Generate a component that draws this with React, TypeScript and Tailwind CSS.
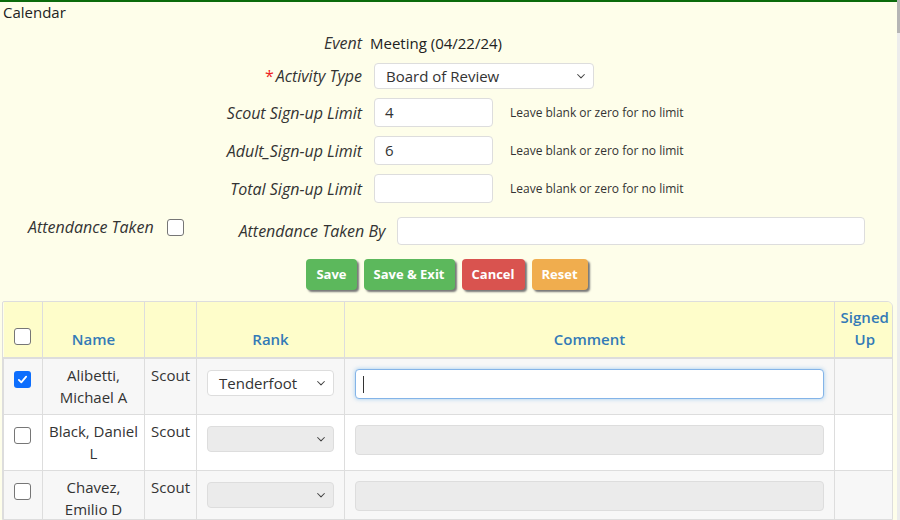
import React from "react";

const font = { fontFamily: '"Open Sans", "Noto Sans", sans-serif' };

function Chevron() {
  return (
    <svg width="12" height="12" viewBox="0 0 16 16" className="text-[#444]">
      <path d="M3.5 6l4.5 4.5L12.5 6" fill="none" stroke="currentColor" strokeWidth="1.4" strokeLinecap="round" strokeLinejoin="round" />
    </svg>
  );
}

function Checkbox({ checked }: { checked?: boolean }) {
  if (checked) {
    return (
      <div className="w-[17px] h-[17px] rounded-[3px] bg-[#0d6efd] flex items-center justify-center">
        <svg width="13" height="13" viewBox="0 0 16 16">
          <path d="M3.5 8.5l3 3 6-7" fill="none" stroke="white" strokeWidth="2.2" strokeLinecap="round" strokeLinejoin="round" />
        </svg>
      </div>
    );
  }
  return <div className="w-[17px] h-[17px] rounded-[3px] border border-[#767676] bg-white" />;
}

function LimitRow({ label, value }: { label: string; value: string }) {
  return (
    <div className="flex items-center h-[29px]">
      <div className="w-[362px] text-right italic text-[16px] text-[#333]">{label}</div>
      <div className="ml-[12px] w-[119px] h-[29px] bg-white border border-[#ddd] rounded-[4px] flex items-center px-[10px] text-[15px] text-[#333]">{value}</div>
      <div className="ml-[17px] text-[12px] text-[#333]">Leave blank or zero for no limit</div>
    </div>
  );
}

function Btn({ label, cls }: { label: string; cls: string }) {
  return (
    <div className={`h-[31px] px-[10px] rounded-[4px] flex items-center text-white font-bold text-[13px] shadow-[2px_2px_2px_#777] ${cls}`}>{label}</div>
  );
}

function Row({ name1, name2, checked, rank, focused, bg }: { name1: string; name2: string; checked?: boolean; rank?: string; focused?: boolean; bg: string }) {
  return (
    <tr className={`${bg} h-[56px]`}>
      <td className="border border-[#ddd] align-top pt-[12px] pl-[10px]">
        <Checkbox checked={checked} />
      </td>
      <td className="border border-[#ddd] align-top text-center pt-[5px] leading-[22px] text-[15px] text-[#333]">
        {name1}
        <br />
        {name2}
      </td>
      <td className="border border-[#ddd] align-top pt-[5px] pl-[6px] leading-[22px] text-[15px] text-[#333]">Scout</td>
      <td className="border border-[#ddd] align-top pt-[11px] px-[10px]">
        <div className={`h-[26px] rounded-[4px] border flex items-center justify-between pl-[11px] pr-[6px] text-[15px] text-[#333] ${rank ? "bg-white border-[#ddd]" : "bg-[#ebebeb] border-[#ddd]"}`}>
          <span>{rank ?? ""}</span>
          <Chevron />
        </div>
      </td>
      <td className="border border-[#ddd] align-top pt-[10px] pl-[10px] pr-[10px]">
        {focused ? (
          <div className="h-[30px] rounded-[4px] border border-[#84b4e8] bg-white shadow-[0_0_4px_rgba(102,175,233,0.6)] flex items-center pl-[7px]">
            <div className="w-px h-[17px] bg-[#333]" />
          </div>
        ) : (
          <div className="h-[30px] rounded-[4px] border border-[#ddd] bg-[#ebebeb]" />
        )}
      </td>
      <td className="border border-[#ddd]" />
    </tr>
  );
}

export default function App() {
  return (
    <div style={font} className="w-[900px] h-[520px] overflow-hidden flex bg-[#fefeea]">
      <div className="w-[897px] flex flex-col border-t-[2px] border-[#0b6b0b]">
        <div className="pl-[3px] text-[15px] text-[#222] leading-[20px]">Calendar</div>

        <div className="flex items-center mt-[11px] h-[20px]">
          <div className="w-[362px] text-right italic text-[16px] text-[#333]">Event</div>
          <div className="ml-[8px] text-[15px] text-[#222]">Meeting (04/22/24)</div>
        </div>

        <div className="flex items-center mt-[10px] h-[26px]">
          <div className="w-[362px] text-right italic text-[16px] text-[#333]">
            <span className="text-[#e22] not-italic mr-[2px]">*</span>Activity Type
          </div>
          <div className="ml-[12px] w-[220px] h-[26px] bg-white border border-[#ddd] rounded-[4px] flex items-center justify-between pl-[11px] pr-[6px] text-[15px] text-[#333]">
            <span>Board of Review</span>
            <Chevron />
          </div>
        </div>

        <div className="flex flex-col gap-[9px] mt-[9px]">
          <LimitRow label="Scout Sign-up Limit" value="4" />
          <LimitRow label="Adult_Sign-up Limit" value="6" />
          <LimitRow label="Total Sign-up Limit" value="" />
        </div>

        <div className="flex items-center mt-[14px] h-[28px]">
          <div className="ml-[28px] italic text-[16px] text-[#333] mb-[8px]">Attendance Taken</div>
          <div className="ml-[13px] mb-[8px]">
            <Checkbox />
          </div>
          <div className="ml-[55px] italic text-[16px] text-[#333]">Attendance Taken By</div>
          <div className="ml-[12px] w-[468px] h-[28px] bg-white border border-[#ddd] rounded-[4px]" />
        </div>

        <div className="flex justify-center gap-[7px] mt-[14px] pr-[3px]">
          <Btn label="Save" cls="bg-[#5cb85c]" />
          <Btn label="Save & Exit" cls="bg-[#5cb85c]" />
          <Btn label="Cancel" cls="bg-[#d9534f]" />
          <Btn label="Reset" cls="bg-[#f0ad4e]" />
        </div>

        <div className="ml-[2px] mt-[11px] w-[891px] border border-[#ddd] rounded-tr-[6px] rounded-tl-[2px] overflow-hidden">
          <table className="w-[891px] border-collapse table-fixed">
            <colgroup>
              <col className="w-[39px]" />
              <col className="w-[102px]" />
              <col className="w-[52px]" />
              <col className="w-[148px]" />
              <col className="w-[490px]" />
              <col className="w-[60px]" />
            </colgroup>
            <thead>
              <tr className="bg-[#fefdca] h-[56px] border-b-[2px] border-[#ddd]">
                <th className="border-r border-[#ddd] align-bottom pb-[12px] pl-[10px] text-left">
                  <Checkbox />
                </th>
                <th className="border-r border-[#ddd] align-bottom pb-[7px] text-[15px] font-semibold text-[#337ab7] leading-[22px]">Name</th>
                <th className="border-r border-[#ddd]" />
                <th className="border-r border-[#ddd] align-bottom pb-[7px] text-[15px] font-semibold text-[#337ab7] leading-[22px]">Rank</th>
                <th className="border-r border-[#ddd] align-bottom pb-[7px] text-[15px] font-semibold text-[#337ab7] leading-[22px]">Comment</th>
                <th className="align-bottom pb-[7px] text-[15px] font-semibold text-[#337ab7] leading-[22px]">Signed<br />Up</th>
              </tr>
            </thead>
            <tbody>
              <Row name1="Alibetti," name2="Michael A" checked rank="Tenderfoot" focused bg="bg-[#f7f7f7]" />
              <Row name1="Black, Daniel" name2="L" bg="bg-white" />
              <Row name1="Chavez," name2="Emilio D" bg="bg-[#f7f7f7]" />
            </tbody>
          </table>
        </div>
      </div>
      <div className="w-[3px] bg-[#ececec] flex flex-col">
        <div className="h-[33px] bg-[#b5b5b5]" />
      </div>
    </div>
  );
}
